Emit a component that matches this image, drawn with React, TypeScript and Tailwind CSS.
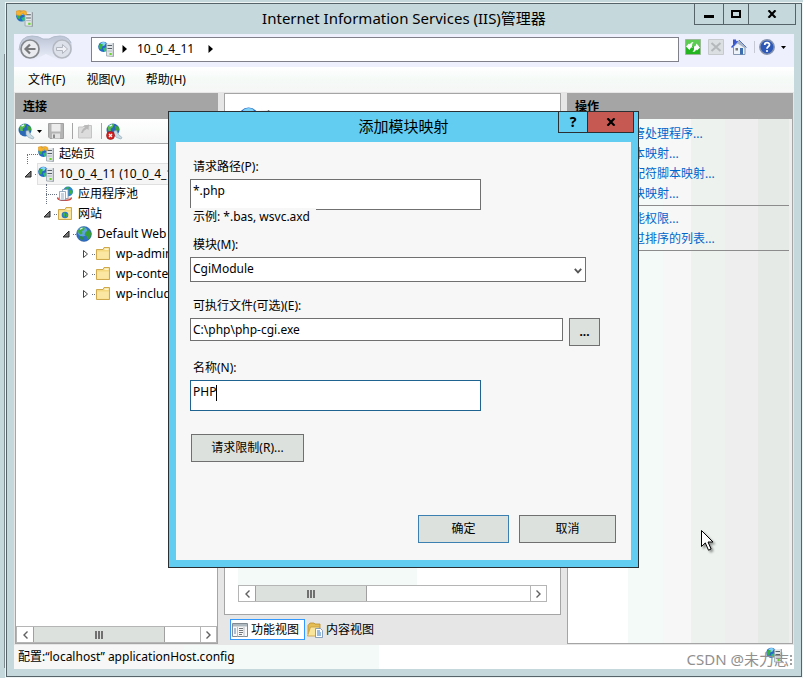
import React from 'react';

interface IconProps {
  className?: string;
}

const GlobeIcon: React.FC<IconProps> = ({ className = 'w-4 h-4' }) => (
  <svg viewBox="0 0 16 16" className={className}>
    <circle cx="8" cy="8" r="7.5" fill="#2f6fc4" />
    <circle cx="6.5" cy="5.5" r="5" fill="#6fb6ee" opacity="0.7" />
    <path d="M2 4.5 5 1.6 9 1.5 8 4 6 5 6.5 7.5 4 8.5 2.5 7z" fill="#3fae3a" />
    <path d="M9.5 6 13 4 15.2 7 14.5 11 12 13.5 10.5 10 8.5 8.5z" fill="#37a034" />
    <path d="M3 10 6.5 10.5 7 13 5.5 15z" fill="#2c8d3b" />
    <path d="M4 3.2 6.5 2" stroke="#e4f8ff" strokeWidth="1.2" />
    <circle cx="8" cy="8" r="7.5" fill="none" stroke="#215091" strokeOpacity="0.6" strokeWidth="0.7" />
  </svg>
);

const ServerIcon: React.FC<IconProps & { spark?: boolean }> = ({ className = 'w-4 h-4', spark }) => (
  <svg viewBox="0 0 16 16" className={className}>
    <circle cx="5.3" cy="5.8" r="5.1" fill="#2468c8" />
    <path d="M2.5 2Q5.500 0 8 2L6.500 4.500 3.500 5.500z" fill="#7fd2f5" />
    <path d="M.6 5 2.600 2.800 5 3.500 4 6 3.600 8.500 1.500 8z" fill="#35b53a" />
    <path d="M5 7.500 8.500 6 9 9.500 6.500 10.700z" fill="#28c27c" />
    <path d="M8.500 2.500 15.500 2v13.500l-7-.5z" fill="#e3e7ea" />
    <path d="M8.500 2.500v12.500l7 .5" fill="none" stroke="#9aa4ab" strokeWidth="0.8" />
    <path d="M15.300 2v13.500" stroke="#6e7980" strokeWidth="0.8" />
    <path d="M9.500 4.500h4.500M9.500 7.500h4.500" stroke="#566068" strokeWidth="1" />
    <path d="M9.500 10h4.500" stroke="#aeb7bd" strokeWidth="1" />
    <rect x="11.500" y="12" width="2.200" height="2" fill="#69d42c" />
    {spark && (
      <path
        d="M.4 1 4.200.3 3.800 2Q7-.8 9.600 1.400L10 4.200 7 4.600 6.800 2.800 3.600 5.400.6 4.600z"
        fill="#f6b32c"
        stroke="#dd8a12"
        strokeWidth="0.5"
      />
    )}
  </svg>
);

const ConnectIcon: React.FC<IconProps & { remove?: boolean }> = ({ className = 'w-[17px] h-[17px]', remove }) => (
  <svg viewBox="0 0 17 17" className={className}>
    <circle cx="7" cy="7" r="6.5" fill="#2a68b5" />
    <path d="M1.5 4 5 1.2 8 1 7 4 4.5 6 5 8 2.5 8z" fill="#57bd48" />
    <path d="M9 3 12.5 3.5 13.3 7 10 9z" fill="#3ba33c" />
    <path d="M3.5 3.2 6 2" stroke="#dff6ff" strokeWidth="1.4" />
    <path d="m8 8 2.500-.5 2 4 3.500 3-1 1.500-4.500-1.500-2.500-3z" fill="#c9dbe4" stroke="#86a0ae" strokeWidth="0.6" />
    {remove && (
      <>
        <circle cx="4.5" cy="12.5" r="4" fill="#d22222" stroke="#8f1414" strokeWidth="0.6" />
        <path d="m3 11 3 3m0-3-3 3" stroke="#fff" strokeWidth="1.2" />
      </>
    )}
  </svg>
);

const FolderIcon: React.FC<IconProps & { globe?: boolean }> = ({ className = 'w-4 h-4', globe }) => (
  <svg viewBox="0 0 16 16" className={className}>
    <path d="M1.5 3.5H8l1-2h5.5v12h-13z" fill="#f5d980" stroke="#c9a13f" strokeWidth="0.9" />
    <path d="M9.5 3.2h4" stroke="#fff8d8" strokeWidth="1.4" />
    <path d="M2.2 5.5h11.6v7.3H2.2z" fill="#fbe7a2" />
    {globe && (
      <>
        <circle cx="8" cy="9" r="3.3" fill="#2c79c8" />
        <path d="M6 7.5 8 6.4 8.5 9 7 11zM9.2 8l1.8.4-.6 2.2-1.2.4z" fill="#41b43a" />
      </>
    )}
  </svg>
);

const PoolsIcon: React.FC = () => (
  <svg viewBox="0 0 16 16" className="w-4 h-4">
    <circle cx="11" cy="5.5" r="5" fill="#2a86d0" />
    <path d="M8 2 12 .8 11 4zM13 4l2.7 1-1 3.5-2-1z" fill="#3db13e" />
    <path d="M.5 11.500c0 4 14 4 14 0" fill="#e8b9b4" stroke="#c9372c" strokeWidth="1.2" />
    <path d="M5.5 3.5h5.5v9H5.5z" fill="#fff" stroke="#7e98b0" strokeWidth="0.8" />
    <path d="M2.5 5.5h6v8.5h-6z" fill="#f8fbff" stroke="#7e98b0" strokeWidth="0.8" />
    <path d="M4 8h3M4 10h3M4 12h3" stroke="#7e98b0" strokeWidth="0.8" />
  </svg>
);

const SaveIcon: React.FC = () => (
  <svg viewBox="0 0 16 16" className="w-4 h-4">
    <path d="M.5.5h15v15H2l-1.5-1.5z" fill="#b4b4b4" stroke="#a2a2a2" />
    <path d="M3.5 1h9v7.500h-9z" fill="#ececec" />
    <path d="M4 10.500h8v5H4z" fill="#e2e2e2" />
    <path d="M5 11.500h2v3.500H5z" fill="#8b8b8b" />
  </svg>
);

const UpIcon: React.FC = () => (
  <svg viewBox="0 0 16 16" className="w-4 h-4">
    <path d="M1.500 4H6l1.500-1.500H14.500V15h-13z" fill="#dcdcdc" stroke="#c4c4c4" />
    <path d="M4 10c1-3 2-4.500 4-5.500L6.500 3 12 1.500 11.500 7 10 5.800C8 7 6.500 8 6 10z" fill="#b8b8b8" />
  </svg>
);

const BackForward: React.FC = () => (
  <div className="relative flex h-7 w-[56px] shrink-0 items-center justify-between">
    <svg viewBox="0 0 56 28" className="absolute inset-0 h-full w-full" fill="none">
      <defs>
        <linearGradient id="pill" x1="0" y1="0" x2="0" y2="1">
          <stop offset="0" stopColor="#bcc5d6" />
          <stop offset="1" stopColor="#eef1fc" />
        </linearGradient>
      </defs>
      <path d="M1 16V12Q3 1 14 1q7 0 11 3h6q4-3 11-3 11 0 12 10v6L42 26 28 19 14 26z" fill="url(#pill)" />
      <path d="M1 15Q2 1 14 1q7 0 11 3h6q4-3 11-3 8 0 11 7" stroke="#b3bccb" />
    </svg>
    <button aria-label="后退" className="relative ml-0.5 h-5 w-5">
      <svg viewBox="0 0 20 20" fill="none">
        <circle cx="10" cy="10" r="9" fill="#e9ebee" stroke="#868a8e" strokeWidth="1.7" />
        <path d="M15.500 10H6M10 5.500 5.500 10l4.500 4.500" stroke="#77797b" strokeWidth="2.2" />
      </svg>
    </button>
    <button aria-label="前进" className="relative mr-0.5 h-5 w-5">
      <svg viewBox="0 0 20 20" fill="none">
        <circle cx="10" cy="10" r="9" fill="#dde1ea" stroke="#b4b8c1" strokeWidth="1.5" />
        <path d="M4.500 8.500h6V5.500L15.500 10l-5 4.500v-3h-6z" fill="#eef0f5" stroke="#b1b5bd" />
      </svg>
    </button>
  </div>
);

const ArrowRightSmall: React.FC = () => (
  <svg viewBox="0 0 5 8" className="h-2 w-[5px]">
    <path d="M.5 0 5 4 .5 8z" fill="#000" />
  </svg>
);

const ArrowDownSmall: React.FC = () => (
  <svg viewBox="0 0 5 3" className="h-[3px] w-[5px]">
    <path d="M0 0h5L2.500 3z" fill="#000" />
  </svg>
);

const CrossIcon: React.FC = () => (
  <svg viewBox="0 0 10 8" className="h-2 w-[10px]">
    <path d="M1.500.3 8.500 7.700M8.500.3 1.500 7.700" stroke="#000" strokeWidth="2.200" />
  </svg>
);

const HorizontalScrollbar: React.FC<{ thumb: string }> = ({ thumb }) => (
  <div className="flex h-[17px] border border-[#b5b5b5] bg-white">
    <button aria-label="向左滚动" className="flex w-4 items-center justify-center">
      <svg viewBox="0 0 5 8" className="h-2 w-[5px]" fill="none">
        <path d="M4.500.5 1 4l3.500 3.500" stroke="#606060" strokeWidth="1.400" />
      </svg>
    </button>
    <div className="flex-1">
      <div className={`flex h-full items-center justify-center gap-px border-x border-[#a0a0a0] bg-[#dce1dd] ${thumb}`}>
        <span className="h-2 w-0.5 bg-[#707070]" />
        <span className="h-2 w-0.5 bg-[#707070]" />
        <span className="h-2 w-0.5 bg-[#707070]" />
      </div>
    </div>
    <button aria-label="向右滚动" className="flex w-4 items-center justify-center border-l border-[#b5b5b5]">
      <svg viewBox="0 0 5 8" className="h-2 w-[5px]" fill="none">
        <path d="M.5.5 4 4 .5 7.500" stroke="#606060" strokeWidth="1.400" />
      </svg>
    </button>
  </div>
);

interface TreeItem {
  label: string;
  indent: string;
  icon: React.ReactNode;
  state: 'open' | 'closed' | 'first' | 'leaf';
  selected?: boolean;
}

const treeItems: TreeItem[] = [
  { label: '起始页', indent: 'pl-2', icon: <ServerIcon spark />, state: 'first' },
  { label: '10_0_4_11 (10_0_4_11\\Administrator)', indent: 'pl-2', icon: <ServerIcon />, state: 'open', selected: true },
  { label: '应用程序池', indent: 'pl-[27px]', icon: <PoolsIcon />, state: 'leaf' },
  { label: '网站', indent: 'pl-[27px]', icon: <FolderIcon globe />, state: 'open' },
  { label: 'Default Web Site', indent: 'pl-[46px]', icon: <GlobeIcon />, state: 'open' },
  { label: 'wp-admin', indent: 'pl-[65px]', icon: <FolderIcon />, state: 'closed' },
  { label: 'wp-content', indent: 'pl-[65px]', icon: <FolderIcon />, state: 'closed' },
  { label: 'wp-includes', indent: 'pl-[65px]', icon: <FolderIcon />, state: 'closed' },
];

const TreeMarker: React.FC<{ state: TreeItem['state'] }> = ({ state }) => {
  if (state === 'first' || state === 'leaf') {
    return (
      <span className="flex h-full w-[14px] shrink-0 flex-col pl-[3px]">
        <span className={`h-1/2 ${state === 'leaf' ? 'border-l border-dotted border-gray-500' : ''}`} />
        <span className="h-1/2 border-l border-t border-dotted border-gray-500" />
      </span>
    );
  }
  return (
    <span className="flex w-[14px] shrink-0 items-center justify-between">
      <svg viewBox="0 0 8 8" className="h-2 w-2">
        {state === 'open' ? (
          <path d="M7 1v6H1z" fill="#777" stroke="#222" />
        ) : (
          <path d="M2.500.5 6.500 4l-4 3.500z" fill="#fff" stroke="#444" />
        )}
      </svg>
      <span className="w-[3px] border-t border-dotted border-gray-500" />
    </span>
  );
};

const ConnectionsPanel: React.FC = () => (
  <aside className="flex w-[203px] shrink-0 flex-col border border-[#a5a5a5] bg-white">
    <h2 className="h-[25px] bg-[#a5a5a5] pl-[7px] leading-[26px] font-bold">连接</h2>
    <div className="flex h-[25px] items-center border-b border-[#a5a5a5] bg-linear-to-b from-white to-[#f4f6f5] pl-0.5">
      <button aria-label="连接到服务器" className="flex items-center gap-0.5">
        <ConnectIcon />
        <ArrowDownSmall />
      </button>
      <button aria-label="保存" className="ml-1.5">
        <SaveIcon />
      </button>
      <span className="ml-2 h-4 w-px bg-[#a5a5a5]" />
      <button aria-label="上移" className="ml-1">
        <UpIcon />
      </button>
      <span className="ml-2 h-4 w-px bg-[#a5a5a5]" />
      <button aria-label="断开连接" className="ml-1">
        <ConnectIcon remove />
      </button>
    </div>
    <ul className="flex-1 overflow-hidden">
      {treeItems.map((item) => (
        <li key={item.label} className={`flex h-5 items-center whitespace-nowrap ${item.indent}`}>
          <TreeMarker state={item.state} />
          <span
            className={`flex h-full flex-1 items-center gap-[5px] [&>svg]:shrink-0 ${
              item.selected ? 'bg-[#f5f5f5] outline outline-[#e0e0e0]' : ''
            }`}
          >
            {item.icon}
            {item.label}
          </span>
        </li>
      ))}
    </ul>
    <HorizontalScrollbar thumb="w-[132px]" />
  </aside>
);

const FeaturePanel: React.FC = () => (
  <main className="flex min-w-0 flex-1 flex-col">
    <div className="flex flex-1 flex-col border border-[#a5a5a5] bg-white px-[13px] pt-3 pb-3">
      <div className="flex items-start gap-[18px]">
        <ServerIcon className="h-8 w-8" />
        <h1 className="pt-1 text-xl leading-6">处理程序映射</h1>
      </div>
      <div className="flex-1 bg-[linear-gradient(90deg,#f4faf7_58%,#fff_58%)]" />
      <HorizontalScrollbar thumb="w-[112px]" />
    </div>
    <div className="flex h-[29px] items-center gap-0.5 pl-1.5">
      <button className="flex h-[21px] items-center gap-[3px] border border-[#3399ff] bg-white pr-[5px] pl-px">
        <svg viewBox="0 0 16 16" className="w-4 h-4">
          <path d="M.5 1.500h15v13H.5z" fill="#f8f8f8" stroke="#808a90" />
          <path d="M1 2h14v2.500H1z" fill="#aeb9bf" />
          <path d="M5.500 5v9.500M12 5v9.500" stroke="#b9c0c4" />
          <path d="M2 7h2M2 9h2M2 11h2" stroke="#5c86b0" />
          <path d="M7 6.500h4M7 8.500h4M7 10.500h4M7 12.500h3" stroke="#73777a" />
        </svg>
        功能视图
      </button>
      <button className="flex h-[21px] items-center gap-[3px]">
        <svg viewBox="0 0 16 16" className="w-4 h-4">
          <path d="M1 3.500 3 1h4l1 1h5v10H1z" fill="#e4bd55" stroke="#b98e2c" strokeWidth="0.800" />
          <path d="M.5 14 3.500 5h9l-2 9z" fill="#fae59d" stroke="#c49f41" strokeWidth="0.800" />
          <path d="M8.500 6.500h5l2 2v7h-7z" fill="#fff" stroke="#6c8cad" strokeWidth="0.800" />
          <path d="M10 9h3M10 11h4M10 13h4" stroke="#2e78c4" />
        </svg>
        内容视图
      </button>
    </div>
  </main>
);

const actionGroups = [
  ['添加托管处理程序...', '添加脚本映射...', '添加通配符脚本映射...', '添加模块映射...'],
  ['编辑功能权限...', '查看经过排序的列表...'],
];

const ActionsPanel: React.FC = () => (
  <aside className="flex w-[226px] shrink-0 flex-col border border-[#a5a5a5]">
    <h2 className="h-[25px] bg-[#a5a5a5] pl-[7px] leading-[26px] font-bold">操作</h2>
    <div className="flex-1 bg-[linear-gradient(90deg,#fff_60px,#f4faf7_60px_95px,#f7f7f7_95px_123px,#edf2ee_123px_157px,#eee_157px_190px,#e6eae6_190px_221px,#eee_221px)] pt-[5px] pr-[3px]">
      {actionGroups.map((group) => (
        <ul key={group[0]} className="mb-[3px] border-b border-[#8c8c8c] pb-px pl-[29px]">
          {group.map((action) => (
            <li key={action} className="h-5 leading-5">
              <a href="#" className="text-[#0066cc]">
                {action}
              </a>
            </li>
          ))}
        </ul>
      ))}
    </div>
  </aside>
);

const NavBar: React.FC = () => (
  <nav className="flex h-[33px] items-center bg-[#eef1fd] pr-2 pb-[3px] pl-[4px]">
    <BackForward />
    <div className="ml-[17px] flex h-[25px] flex-1 items-center border border-[#80808a] bg-white pl-1.5">
      <ServerIcon className="mr-2 h-4 w-4" />
      <ArrowRightSmall />
      <span className="mx-[10px] pr-1">10_0_4_11</span>
      <ArrowRightSmall />
    </div>
    <div className="flex items-center pb-1 pl-1.5">
      <button aria-label="刷新">
        <svg viewBox="0 0 16 16" className="w-4 h-4">
          <path d="M.5.500h15v15H.5z" fill="#22b51f" stroke="#9bb998" />
          <path d="M1 1h14v6H1z" fill="#85dc77" opacity="0.600" />
          <path d="M1 7.500 4 4.500l1 1Q5.500 3 8.500 3 6.500 5 7 7.500L8 8.500H6L4.500 11z" fill="#fff" />
          <path d="M15 8.500 12 11.500l-1-1Q10.500 13 7.500 13 9.500 11 9 8.500L8.500 7.500l2-.5L11.500 4.500z" fill="#fff" />
        </svg>
      </button>
      <button aria-label="停止" className="ml-[7px]">
        <svg viewBox="0 0 16 16" className="w-4 h-4">
          <path d="M.5.500h15v15H.5z" fill="#dcdfe2" stroke="#c6cacd" />
          <path d="m3.500 4 9 8m0-8-9 8" stroke="#b4b8ba" strokeWidth="2" />
        </svg>
      </button>
      <button aria-label="主页" className="ml-[7px]">
        <svg viewBox="0 0 16 16" className="w-4 h-4">
          <path d="M2.500 7.500 8 2.500l6 5v8H2.500z" fill="#eef3fa" stroke="#8597b1" />
          <path d="M5 3.500 8 1l7 7-1.500 1z" fill="#a8b3c6" />
          <path d="M2 .5h3v3L2 6z" fill="#3d55c8" />
          <path d="M.5 8.500 5 3.500 6.500 2" fill="none" stroke="#3656d4" strokeWidth="1.500" />
          <path d="m8 1 7.500 7.500" stroke="#5c77c0" strokeWidth="1" />
          <path d="M9 9h3v6.500H9z" fill="#3d6eb0" />
          <path d="M4.500 9H7v2.500H4.500z" fill="#777" />
        </svg>
      </button>
      <span className="ml-[7px] h-3 w-px bg-[#c8cad3]" />
      <button aria-label="帮助" className="ml-1 flex items-center gap-1.5">
        <svg viewBox="0 0 16 16" className="w-4 h-4" fill="none">
          <circle cx="8" cy="8" r="7.200" fill="#2d58b8" stroke="#8592ac" strokeWidth="1.500" />
          <path d="M5.700 6c0-3 4.800-3 4.800-.3C10.500 7.500 8 7.400 8 9.700" stroke="#fff" strokeWidth="1.800" />
          <circle cx="8" cy="12" r="1.100" fill="#fff" />
        </svg>
        <ArrowDownSmall />
      </button>
    </div>
  </nav>
);

const dialogButton = 'h-7 border bg-[#dce1dd] text-center';
const textBox = 'w-full border bg-white px-0.5 outline-none';

const ModuleMappingDialog: React.FC = () => (
  <section
    role="dialog"
    aria-labelledby="dialog-title"
    className="absolute top-[111px] left-[168px] w-[471px] border border-[#2a2f33] bg-[#62cdf0] px-[7px] pb-[7px]"
  >
    <header className="relative h-[30px]">
      <h2 id="dialog-title" className="text-center text-[15px] leading-7">
        添加模块映射
      </h2>
      <div className="absolute -top-px -right-[3px] flex h-[22px] border border-[#2a2f33]">
        <button aria-label="帮助" className="w-7 font-bold text-[14px]">
          ?
        </button>
        <button
          aria-label="关闭"
          className="flex w-[46px] items-center justify-center border-l border-[#2a2f33] bg-[#c65a53]"
        >
          <CrossIcon />
        </button>
      </div>
    </header>

    <form className="bg-[#f7f7f7] px-[14px] pt-4 pb-[17px]">
      <div className="w-[291px]">
        <label htmlFor="path" className="block h-[21px] pl-[3px] leading-[18px]">
          请求路径(P):
        </label>
        <input id="path" defaultValue="*.php" className={`${textBox} block h-[31px] border-[#707070] pb-2`} />
        <p className="relative -mt-0.5 h-[18px] w-[126px] bg-[#f7f7f7] pl-[3px] leading-[18px] whitespace-nowrap">
          示例: *.bas, wsvc.axd
        </p>
      </div>

      <div className="relative mt-[10px] w-[396px]">
        <label htmlFor="module" className="block h-[21px] pl-[3px] leading-[18px]">
          模块(M):
        </label>
        <select id="module" className={`${textBox} block h-[25px] appearance-none border-[#707070] pb-0.5`}>
          <option>CgiModule</option>
        </select>
        <svg viewBox="0 0 8 6" className="pointer-events-none absolute right-1 bottom-2 h-1.5 w-2" fill="none">
          <path d="M.8.8 4 4.300 7.200.8" stroke="#555" strokeWidth="1.800" />
        </svg>
      </div>

      <div className="mt-[15px]">
        <label htmlFor="executable" className="block h-[21px] pl-[3px] leading-[18px]">
          可执行文件(可选)(E):
        </label>
        <div className="flex gap-1.5">
          <div className="w-[373px]">
            <input
              id="executable"
              defaultValue="C:\php\php-cgi.exe"
              className={`${textBox} block h-[23px] border-[#707070]`}
            />
          </div>
          <button type="button" className={`${dialogButton} w-[31px] border-[#707070] font-bold`}>
            ...
          </button>
        </div>
      </div>

      <div className="relative mt-[13px] w-[291px]">
        <label htmlFor="name" className="block h-[21px] pl-[3px] leading-[18px]">
          名称(N):
        </label>
        <input id="name" defaultValue="PHP" className={`${textBox} block h-[31px] border-[#1f6391] pb-2 caret-transparent`} />
        <span className="absolute bottom-2.5 left-[26px] h-4 w-px bg-black" />
      </div>

      <button type="button" className={`${dialogButton} mt-[23px] ml-px w-[113px] border-[#707070]`}>
        请求限制(R)...
      </button>

      <div className="mt-[53px] flex justify-end gap-[10px] pr-px">
        <button type="submit" className={`${dialogButton} w-[91px] border-[#3c7fb1]`}>
          确定
        </button>
        <button type="button" className={`${dialogButton} w-[97px] border-[#707070]`}>
          取消
        </button>
      </div>
    </form>
  </section>
);

const App: React.FC = () => {
  return (
    <div className="relative flex min-h-screen flex-col bg-[#c5d8dc] pt-[3px] pr-px pb-px pl-1.5 font-['Noto_Sans','Noto_Sans_CJK_SC',sans-serif] text-xs text-black">
      <div className="absolute top-[54px] bottom-[10px] left-1 w-px bg-[#7d8a8f]" />
      <div className="flex flex-1 flex-col border border-[#56646a] px-[7px] pb-[7px] outline outline-[#eef3f4]">
        <header className="relative h-[30px]">
          <ServerIcon spark className="absolute top-1.5 left-0.5 h-[17px] w-[17px]" />
          <h1 className="text-center text-[15px] leading-7">Internet Information Services (IIS)管理器</h1>
          <div className="absolute -top-px -right-[2px] flex h-[22px] border border-[#56646a]">
            <button aria-label="最小化" className="flex w-7 items-center justify-center">
              <span className="mt-1 h-[3px] w-2.5 bg-black" />
            </button>
            <button aria-label="最大化" className="flex w-[26px] items-center justify-center border-x border-[#56646a]">
              <span className="h-2 w-2.5 border-2 border-black" />
            </button>
            <button aria-label="关闭" className="flex w-[46px] items-center justify-center">
              <CrossIcon />
            </button>
          </div>
        </header>

        <NavBar />

        <div className="flex h-[25px] items-center gap-[21px] bg-linear-to-b from-white via-[#f5faf7] to-[#f6f6f6] pl-[14px]">
          <button>文件(F)</button>
          <button>视图(V)</button>
          <button>帮助(H)</button>
        </div>

        <div className="flex flex-1 gap-1.5 bg-[#e6e6e6] px-px pt-px pb-px">
          <ConnectionsPanel />
          <FeaturePanel />
          <ActionsPanel />
        </div>

        <footer className="flex h-6 items-center justify-between bg-[linear-gradient(90deg,#f7f7f7_170px,#f4faf7_170px_365px,#fff_365px)] pl-1">
          <span>配置:“localhost” applicationHost.config</span>
          <span className="relative flex items-end gap-px self-end pr-0.5 text-[15px] leading-5 text-[#909090]">
            <ServerIcon className="absolute right-3 bottom-1.5 h-4 w-4" />
            <span className="relative">CSDN @未力志</span>
            <span className="mb-1 h-2.5 border-r-2 border-dotted border-[#a0a0a0]" />
          </span>
        </footer>
      </div>

      <ModuleMappingDialog />

      <svg viewBox="0 0 14 22" className="absolute top-[530px] left-[701px] h-[22px] w-[14px] drop-shadow-[2px_2px_1px_rgba(0,0,0,0.4)]">
        <path d="M.5.500v16l3.800-3.600 3.200 7.300 2.600-1.200L7 12h5z" fill="#fff" stroke="#000" />
      </svg>
    </div>
  );
};

export default App;
